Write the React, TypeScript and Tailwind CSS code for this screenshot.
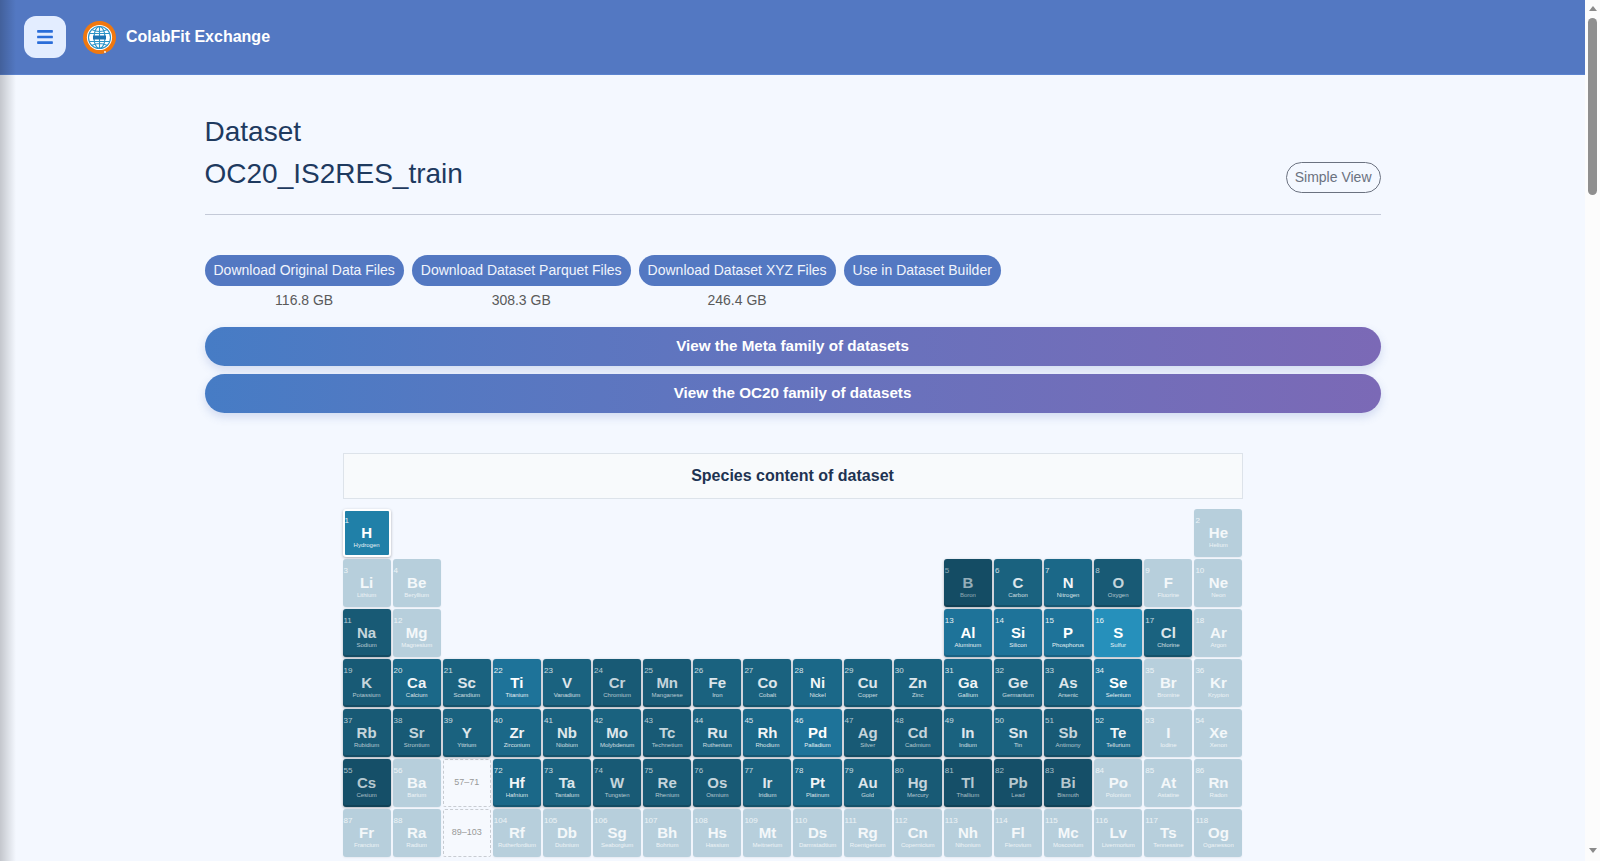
import { FaBars } from 'react-icons/fa';
import clsx from 'clsx';

type Level = 0 | 1 | 2 | 3 | 4 | 5 | 6 | 7 | 8;

// number, symbol, name, shade
type El = [number, string, string, Level];
type Slot = El | string | null;

const rows: Slot[][] = [
  [[1, 'H', 'Hydrogen', 7], ...Array(16).fill(null), [2, 'He', 'Helium', 0]],
  [[3, 'Li', 'Lithium', 0], [4, 'Be', 'Beryllium', 0], ...Array(10).fill(null), [5, 'B', 'Boron', 8], [6, 'C', 'Carbon', 3], [7, 'N', 'Nitrogen', 4], [8, 'O', 'Oxygen', 2], [9, 'F', 'Fluorine', 0], [10, 'Ne', 'Neon', 0]],
  [[11, 'Na', 'Sodium', 2], [12, 'Mg', 'Magnesium', 0], ...Array(10).fill(null), [13, 'Al', 'Aluminum', 5], [14, 'Si', 'Silicon', 5], [15, 'P', 'Phosphorus', 5], [16, 'S', 'Sulfur', 6], [17, 'Cl', 'Chlorine', 3], [18, 'Ar', 'Argon', 0]],
  [[19, 'K', 'Potassium', 2], [20, 'Ca', 'Calcium', 4], [21, 'Sc', 'Scandium', 3], [22, 'Ti', 'Titanium', 5], [23, 'V', 'Vanadium', 3], [24, 'Cr', 'Chromium', 2], [25, 'Mn', 'Manganese', 2], [26, 'Fe', 'Iron', 3], [27, 'Co', 'Cobalt', 3], [28, 'Ni', 'Nickel', 4], [29, 'Cu', 'Copper', 3], [30, 'Zn', 'Zinc', 3], [31, 'Ga', 'Gallium', 4], [32, 'Ge', 'Germanium', 3], [33, 'As', 'Arsenic', 3], [34, 'Se', 'Selenium', 5], [35, 'Br', 'Bromine', 0], [36, 'Kr', 'Krypton', 0]],
  [[37, 'Rb', 'Rubidium', 2], [38, 'Sr', 'Strontium', 2], [39, 'Y', 'Yttrium', 3], [40, 'Zr', 'Zirconium', 4], [41, 'Nb', 'Niobium', 3], [42, 'Mo', 'Molybdenum', 3], [43, 'Tc', 'Technetium', 2], [44, 'Ru', 'Ruthenium', 3], [45, 'Rh', 'Rhodium', 4], [46, 'Pd', 'Palladium', 5], [47, 'Ag', 'Silver', 2], [48, 'Cd', 'Cadmium', 2], [49, 'In', 'Indium', 3], [50, 'Sn', 'Tin', 3], [51, 'Sb', 'Antimony', 2], [52, 'Te', 'Tellurium', 4], [53, 'I', 'Iodine', 0], [54, 'Xe', 'Xenon', 0]],
  [[55, 'Cs', 'Cesium', 1], [56, 'Ba', 'Barium', 0], '57–71', [72, 'Hf', 'Hafnium', 4], [73, 'Ta', 'Tantalum', 3], [74, 'W', 'Tungsten', 2], [75, 'Re', 'Rhenium', 2], [76, 'Os', 'Osmium', 2], [77, 'Ir', 'Iridium', 3], [78, 'Pt', 'Platinum', 4], [79, 'Au', 'Gold', 3], [80, 'Hg', 'Mercury', 2], [81, 'Tl', 'Thallium', 1], [82, 'Pb', 'Lead', 1], [83, 'Bi', 'Bismuth', 1], [84, 'Po', 'Polonium', 0], [85, 'At', 'Astatine', 0], [86, 'Rn', 'Radon', 0]],
  [[87, 'Fr', 'Francium', 0], [88, 'Ra', 'Radium', 0], '89–103', [104, 'Rf', 'Rutherfordium', 0], [105, 'Db', 'Dubnium', 0], [106, 'Sg', 'Seaborgium', 0], [107, 'Bh', 'Bohrium', 0], [108, 'Hs', 'Hassium', 0], [109, 'Mt', 'Meitnerium', 0], [110, 'Ds', 'Darmstadtium', 0], [111, 'Rg', 'Roentgenium', 0], [112, 'Cn', 'Copernicium', 0], [113, 'Nh', 'Nihonium', 0], [114, 'Fl', 'Flerovium', 0], [115, 'Mc', 'Moscovium', 0], [116, 'Lv', 'Livermorium', 0], [117, 'Ts', 'Tennessine', 0], [118, 'Og', 'Oganesson', 0]],
];

const shades: Record<Level, string> = {
  0: 'bg-[#b7cfdc] text-white/85 shadow-[0_1px_2px_rgba(0,0,0,0.06)]',
  1: 'bg-[#154f68] text-white/70 shadow-[inset_0_-2px_0_rgba(0,0,0,0.16),0_1px_3px_rgba(0,0,0,0.3)]',
  2: 'bg-[#185a75] text-white/75 shadow-[inset_0_-2px_0_rgba(0,0,0,0.16),0_1px_3px_rgba(0,0,0,0.3)]',
  3: 'bg-[#1a627f] text-white/85 shadow-[inset_0_-2px_0_rgba(0,0,0,0.16),0_1px_3px_rgba(0,0,0,0.3)]',
  4: 'bg-[#1b6888] text-white/95 shadow-[inset_0_-2px_0_rgba(0,0,0,0.16),0_1px_3px_rgba(0,0,0,0.3)]',
  5: 'bg-[#1e7399] text-white shadow-[inset_0_-2px_0_rgba(0,0,0,0.14),0_1px_3px_rgba(0,0,0,0.3)]',
  6: 'bg-[#2690bb] text-white shadow-[0_1px_3px_rgba(0,0,0,0.25)]',
  7: 'bg-[#2080a8] text-white border-2 border-white shadow-[0_1px_3px_rgba(0,0,0,0.3)]',
  8: 'bg-[#144c64] text-white/55 shadow-[inset_0_-2px_0_rgba(0,0,0,0.16),0_1px_3px_rgba(0,0,0,0.3)]',
};

const downloads = [
  { label: 'Download Original Data Files', size: '116.8 GB' },
  { label: 'Download Dataset Parquet Files', size: '308.3 GB' },
  { label: 'Download Dataset XYZ Files', size: '246.4 GB' },
  { label: 'Use in Dataset Builder', size: '' },
];

function Logo() {
  return (
    <svg viewBox="0 0 33 33" className="w-[33px] h-[33px] shrink-0">
      <circle cx="16.5" cy="16.5" r="16.5" fill="#f0780f" />
      <circle cx="16.5" cy="16.5" r="12.6" fill="#ffffff" />
      <g fill="none" stroke="#2b93c7" strokeWidth="1.1">
        <circle cx="16.5" cy="16.5" r="11" />
        <ellipse cx="16.5" cy="16.5" rx="5.5" ry="11" />
        <path d="M16.5 5.5v22M6.2 12.5h20.6M6.2 20.5h20.6M8.5 8.5q8 4 16 0M8.5 24.5q8-4 16 0" />
      </g>
      <rect x="10" y="14.5" width="13" height="4" fill="#1d74b3" />
      <circle cx="22" cy="31" r="0.9" fill="#ffffff" />
    </svg>
  );
}

function Cell({ slot }: { slot: Slot }) {
  if (slot === null) return <div />;
  if (typeof slot === 'string') {
    return (
      <div className="flex items-center justify-center h-12 rounded-[2px] border border-dashed border-[#c8ccd2] bg-[#f6f9fe] text-[9px] text-[#999]">
        {slot}
      </div>
    );
  }
  const [num, sym, name, level] = slot;
  return (
    <div className={clsx('relative flex flex-col items-center h-12 rounded-[3px] overflow-hidden', shades[level])}>
      <span className={clsx('absolute text-[8px] leading-none opacity-90', level === 7 ? 'left-0 top-[6px]' : 'left-[1px] top-[8px]')}>{num}</span>
      <span className={clsx('text-[15px] font-bold leading-none', level === 7 ? 'mt-[14px]' : 'mt-[16px]')}>{sym}</span>
      <span className="text-[6px] leading-none mt-[2px] opacity-90 whitespace-nowrap">{name}</span>
    </div>
  );
}

export default function App() {
  return (
    <div className="relative flex h-[861px] w-full overflow-hidden bg-[#f4f8ff] font-['Liberation_Sans',Arial,sans-serif]">
      <div className="flex-1 min-w-0">
        <header className="flex items-center h-[75px] bg-[#5378c2] border-b border-[#5c84cf] pl-6">
          <button className="flex items-center justify-center w-[42px] h-[42px] rounded-xl bg-[#e3edff] text-[#2a6dd9]">
            <FaBars className="w-4 h-[18px]" />
          </button>
          <div className="ml-[17px]">
            <Logo />
          </div>
          <span className="ml-[10px] text-base font-bold text-white">ColabFit Exchange</span>
        </header>

        <main className="w-[1176px] mx-auto pt-9">
          <div className="flex items-end justify-between pb-[19px] border-b border-[#c4cad8]">
            <div className="text-[28px] leading-[42px] text-[#1e3a5f]">
              <div>Dataset</div>
              <div>OC20_IS2RES_train</div>
            </div>
            <button className="h-[31px] mb-[2px] px-2 pb-[2px] rounded-2xl border border-[#6b7280] text-sm text-[#6b7280]">
              Simple View
            </button>
          </div>

          <div className="flex gap-2 mt-10">
            {downloads.map((d) => (
              <div key={d.label} className="flex flex-col items-center">
                <button className="h-[31px] px-[9px] pb-[2px] rounded-2xl bg-[#5378c2] text-sm text-[#f0f4fc] whitespace-nowrap">
                  {d.label}
                </button>
                <span className="h-[21px] mt-1 text-sm leading-[21px] text-[#5a5a5a]">{d.size}</span>
              </div>
            ))}
          </div>

          <div className="flex flex-col gap-2 mt-4">
            {['View the Meta family of datasets', 'View the OC20 family of datasets'].map((t) => (
              <button
                key={t}
                className="h-[39px] rounded-[20px] bg-gradient-to-r from-[#467cc5] to-[#7b69b6] text-[15.2px] font-bold text-white shadow-[0_4px_10px_rgba(70,100,180,0.2)]"
              >
                {t}
              </button>
            ))}
          </div>

          <div className="w-[900px] mx-auto mt-10">
            <div className="flex items-center justify-center h-[46px] border border-[#dde3ea] bg-[#f8fafc] text-base font-bold text-[#1e3352]">
              Species content of dataset
            </div>
            <div className="grid grid-cols-18 gap-[2px] mt-[10px]">
              {rows.flat().map((slot, i) => (
                <Cell key={i} slot={slot} />
              ))}
            </div>
          </div>
        </main>
      </div>

      <div className="flex flex-col items-center w-[15px] shrink-0 bg-[#fcfcfc] py-[6px]">
        <div className="w-0 h-0 border-x-[4.5px] border-x-transparent border-b-[5px] border-b-[#8a8a8a]" />
        <div className="w-[9px] h-[177px] mt-[7px] mb-auto rounded-[5px] bg-[#8f8f8f]" />
        <div className="w-0 h-0 border-x-[4.5px] border-x-transparent border-t-[5px] border-t-[#8a8a8a] mb-[2px]" />
      </div>

      <div className="absolute inset-y-0 left-0 w-4 bg-gradient-to-r from-black/20 to-transparent pointer-events-none" />
    </div>
  );
}
